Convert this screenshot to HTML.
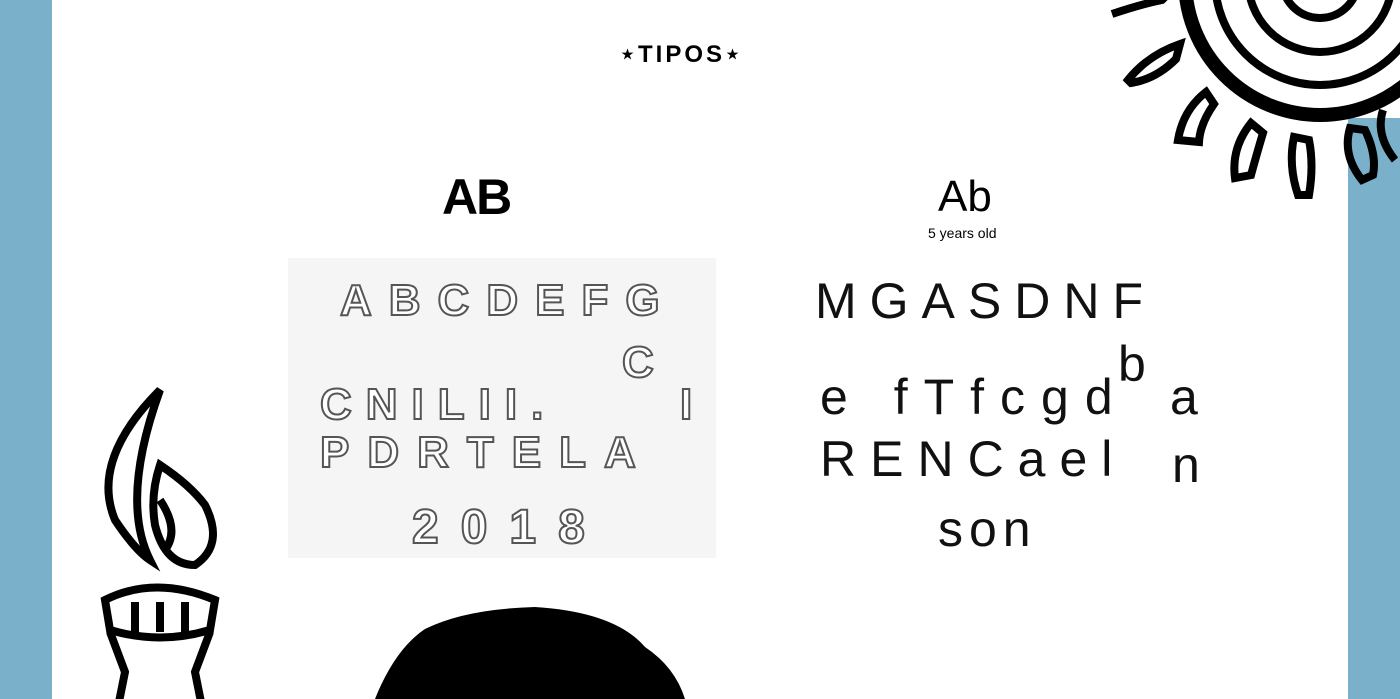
<!DOCTYPE html>
<html><head><meta charset="utf-8"><style>
html,body{margin:0;padding:0;}
body{width:1400px;height:699px;position:relative;overflow:hidden;background:#fff;font-family:"Liberation Sans",sans-serif;}
.bl{position:absolute;left:0;top:0;width:52px;height:699px;background:#7ab0ca;}
.br{position:absolute;left:1348px;top:118px;width:52px;height:581px;background:#7ab0ca;}
.t{position:absolute;font-weight:bold;color:#000;}
.hand{position:absolute;font-family:"Liberation Sans",sans-serif;color:#111;font-size:50px;letter-spacing:13px;white-space:nowrap;}
.paper{position:absolute;left:288px;top:258px;width:428px;height:300px;background:#f5f5f5;}
.pl{position:absolute;font-family:"Liberation Sans",sans-serif;font-weight:bold;color:#fff;-webkit-text-stroke:2px #555;font-size:44px;letter-spacing:14px;white-space:nowrap;}
</style></head><body>
<div class="bl"></div>
<div class="br"></div>
<div class="t" style="left:620px;top:40px;font-size:24px;letter-spacing:3px;">⋆TIPOS⋆</div>
<div class="t" style="left:442px;top:168px;font-size:50px;font-weight:900;letter-spacing:-2px;">AB</div>
<div class="t" style="left:938px;top:172px;font-size:44px;font-weight:normal;">Ab</div>
<div class="t" style="left:928px;top:225px;font-size:14px;font-weight:normal;">5 years old</div>
<div class="paper"></div>
<div class="pl" style="left:340px;top:276px;letter-spacing:17px;">ABCDEFG</div>
<div class="pl" style="left:622px;top:338px;">C</div>
<div class="pl" style="left:320px;top:380px;">CNILII.</div>
<div class="pl" style="left:680px;top:380px;">I</div>
<div class="pl" style="left:320px;top:428px;letter-spacing:18px;">PDRTELA</div>
<div class="pl" style="left:412px;top:500px;letter-spacing:22px;font-size:48px;">2018</div>
<div class="hand" style="left:815px;top:272px;">MGASDNF</div>
<div class="hand" style="left:1118px;top:335px;">b</div>
<div class="hand" style="left:820px;top:368px;letter-spacing:16px;">e fTfcgd</div>
<div class="hand" style="left:1170px;top:368px;">a</div>
<div class="hand" style="left:820px;top:430px;letter-spacing:14px;">RENCael</div>
<div class="hand" style="left:1172px;top:436px;">n</div>
<div class="hand" style="left:938px;top:500px;letter-spacing:6px;">son</div>
<svg style="position:absolute;left:0;top:0" width="1400" height="699">
<g fill="none" stroke="#000" stroke-width="8">
<circle cx="1320" cy="-20" r="135" stroke-width="14"/>
<circle cx="1320" cy="-20" r="105"/>
<circle cx="1320" cy="-20" r="72"/>
<circle cx="1320" cy="-20" r="38"/>
<path d="M1112 14 q30 -10 50 -14 l10 -10" />
<path d="M1128 80 q20 -25 52 -36 l-4 15 q-20 20 -45 24z"/>
<path d="M1178 140 q5 -30 28 -48 l8 12 q-14 20 -15 38z"/>
<path d="M1235 178 q-4 -30 16 -55 l12 10 q-6 20 -12 42z"/>
<path d="M1298 195 q-10 -30 -4 -58 l15 3 q5 25 0 55z"/>
<path d="M1362 180 q-20 -25 -12 -52 l15 2 q12 25 8 45z"/>
<path d="M1395 160 q-20 -25 -12 -50"/>
<path d="M160 390 q-70 70 -45 130 q20 30 35 40 q-30 -60 10 -170z"/>
<path d="M160 465 q30 20 45 40 q20 40 -10 60 q-30 0 -40 -40 q-5 -30 5 -60z"/>
<path d="M160 500 q20 30 5 50"/>
<path d="M105 600 q50 -25 110 0 l-5 30 q-50 15 -100 0z"/>
<path d="M110 632 l15 40 l-6 30 M210 632 l-15 40 l6 30 M135 602 v30 M160 602 v30 M185 602 v30"/>
</g>
<path d="M375 699 q20 -50 50 -70 q40 -20 110 -22 q80 5 110 40 q30 20 40 52z" fill="#000"/>
</svg>
</body></html>
